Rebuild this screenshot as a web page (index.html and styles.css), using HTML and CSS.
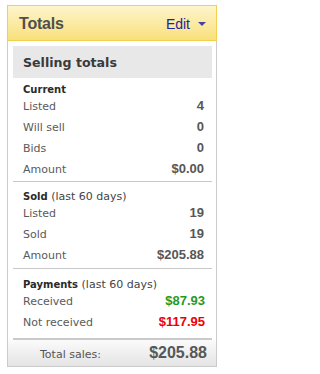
FILE: index.html
```html
<!DOCTYPE html>
<html>
<head>
<meta charset="utf-8">
<title>Totals</title>
<link rel="stylesheet" href="styles.css">
</head>
<body>
<div class="panel">
  <div class="hdr">
    <span class="title">Totals</span>
    <span class="edit">Edit<svg class="caret" width="8" height="4" viewBox="0 0 8 4"><path d="M0 0H8L4 4Z"/></svg></span>
  </div>
  <div class="body">
    <div class="inner">
      <div class="sub">Selling totals</div>
      <div class="sec s1">
        <div class="sh"><b>Current</b></div>
        <div class="row"><span class="lbl">Listed</span><span class="val">4</span></div>
        <div class="row"><span class="lbl">Will sell</span><span class="val">0</span></div>
        <div class="row"><span class="lbl">Bids</span><span class="val">0</span></div>
        <div class="row"><span class="lbl">Amount</span><span class="val">$0.00</span></div>
      </div>
      <div class="sec s2">
        <div class="sh"><b>Sold</b> (last 60 days)</div>
        <div class="row"><span class="lbl">Listed</span><span class="val">19</span></div>
        <div class="row"><span class="lbl">Sold</span><span class="val">19</span></div>
        <div class="row"><span class="lbl">Amount</span><span class="val">$205.88</span></div>
      </div>
      <div class="sec s3">
        <div class="sh"><b>Payments</b> (last 60 days)</div>
        <div class="row"><span class="lbl">Received</span><span class="val pos">$87.93</span></div>
        <div class="row"><span class="lbl">Not received</span><span class="val neg">$117.95</span></div>
      </div>
    </div>
    <div class="foot"><span class="fl">Total sales:</span><span class="fv">$205.88</span></div>
  </div>
</div>
</body>
</html>
```
FILE: styles.css
```css
html, body {
  margin: 0;
  padding: 0;
  background: #fff;
}
body {
  font-family: "DejaVu Sans", Verdana, sans-serif;
  color: #555;
}
.panel {
  width: 210px;
  margin: 5px 0 0 7px;
}
.hdr {
  display: flex;
  justify-content: space-between;
  align-items: baseline;
  height: 33px;
  padding: 1px 10px 0 11px;
  border: 1px solid #f2cf4c;
  background: linear-gradient(#fdf5cc, #f9e07c);
  font-family: "Liberation Sans", Arial, sans-serif;
  line-height: 33px;
}
.title {
  font-size: 16px;
  font-weight: bold;
  color: #4f4f4f;
  letter-spacing: -0.2px;
}
.edit {
  font-size: 14px;
  color: #2424a0;
}
.caret {
  margin-left: 8px;
  vertical-align: 3px;
  fill: #4a40a4;
}
.body {
  border: 1px solid #cbcbcb;
  border-top: 0;
  padding-top: 5px;
}
.inner {
  margin: 0 4px 0 5px;
}
.sub {
  height: 30px;
  padding: 2px 0 0 10px;
  background: #e8e8e8;
  font-size: 12.6px;
  font-weight: bold;
  line-height: 30px;
  color: #3a3a3a;
}
.sec {
  padding: 10px 8px 3px 10px;
  border-bottom: 1px solid #c8c8c8;
}
.s1 {
  padding-top: 7px;
  padding-bottom: 2px;
}
.s3 {
  padding-top: 11px;
  padding-bottom: 6px;
  border-bottom: 2px solid #cacaca;
}
.sh {
  height: 10px;
  font-size: 11px;
  line-height: 10px;
  color: #444;
  white-space: nowrap;
}
.sh b {
  font-size: 10px;
  color: #2a2a2a;
}
.row {
  display: flex;
  justify-content: space-between;
  align-items: baseline;
  height: 21px;
  line-height: 21px;
}
.lbl {
  font-size: 11px;
  color: #5a5a5a;
}
.val {
  font-family: "Liberation Sans", Arial, sans-serif;
  font-size: 13px;
  font-weight: bold;
  color: #565656;
}
.s3 .val {
  margin-right: -1px;
}
.pos {
  color: #1f9a1f;
}
.neg {
  color: #ec0000;
}
.foot {
  display: flex;
  justify-content: space-between;
  align-items: baseline;
  height: 26px;
  padding: 0 9px 0 32px;
  background: linear-gradient(#fbfbfb, #e4e4e4);
  line-height: 26px;
}
.fl {
  font-size: 11px;
  color: #555;
}
.fv {
  font-family: "Liberation Sans", Arial, sans-serif;
  font-size: 16px;
  font-weight: bold;
  color: #575757;
}
```
